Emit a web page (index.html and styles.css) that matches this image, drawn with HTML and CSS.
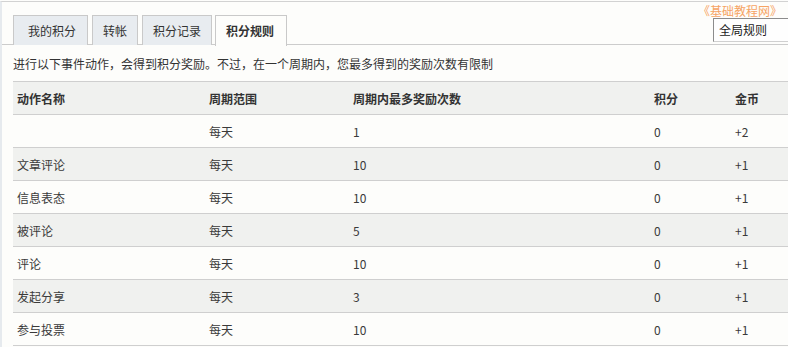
FILE: index.html
```html
<!DOCTYPE html>
<html lang="zh-CN">
<head>
<meta charset="utf-8">
<title>积分规则</title>
<link rel="stylesheet" href="styles.css">
</head>
<body>
<div class="page">
  <a class="brand">《基础教程网》</a>
  <div class="tabbar">
    <ul class="tabs">
      <li class="tab first">我的积分</li>
      <li class="tab">转帐</li>
      <li class="tab">积分记录</li>
      <li class="tab active">积分规则</li>
    </ul>
    <div class="select">全局规则</div>
  </div>
  <p class="intro">进行以下事件动作，会得到积分奖励。不过，在一个周期内，您最多得到的奖励次数有限制</p>
  <table class="rules">
    <colgroup>
      <col class="c1"><col class="c2"><col class="c3"><col class="c4"><col class="c5">
    </colgroup>
    <thead>
      <tr><th>动作名称</th><th>周期范围</th><th>周期内最多奖励次数</th><th>积分</th><th>金币</th></tr>
    </thead>
    <tbody>
      <tr><td></td><td>每天</td><td>1</td><td>0</td><td>+2</td></tr>
      <tr><td>文章评论</td><td>每天</td><td>10</td><td>0</td><td>+1</td></tr>
      <tr><td>信息表态</td><td>每天</td><td>10</td><td>0</td><td>+1</td></tr>
      <tr><td>被评论</td><td>每天</td><td>5</td><td>0</td><td>+1</td></tr>
      <tr><td>评论</td><td>每天</td><td>10</td><td>0</td><td>+1</td></tr>
      <tr><td>发起分享</td><td>每天</td><td>3</td><td>0</td><td>+1</td></tr>
      <tr><td>参与投票</td><td>每天</td><td>10</td><td>0</td><td>+1</td></tr>
    </tbody>
  </table>
</div>
</body>
</html>
```

FILE: styles.css
```css
html, body {
  margin: 0;
  padding: 0;
  background: #fdfdfb;
  overflow: hidden;
}
body {
  font-family: "Noto Sans CJK SC", "Noto Sans", sans-serif;
  font-size: 12px;
  color: #333;
}
.page {
  position: relative;
  margin-top: 1px;
  border-top: 1px solid #d2d2d2;
  border-left: 2px solid #e6eaee;
  height: 345px;
  overflow: hidden;
}
.brand {
  position: absolute;
  top: 1px;
  right: 6px;
  font-size: 12px;
  line-height: 16px;
  color: #f6a464;
  text-decoration: none;
}
.tabbar {
  display: flex;
  justify-content: space-between;
  align-items: flex-start;
  padding: 13px 0 0 11px;
  border-bottom: 1px solid #cccccc;
  height: 29px;
}
.tabs {
  display: flex;
  gap: 4px;
  margin: 0;
  padding: 0;
  list-style: none;
}
.tab {
  height: 29px;
  line-height: 29px;
  padding: 0 10px;
  background: #e8ecf0;
  border: 1px solid #c9c9c9;
  border-bottom: none;
  color: #333;
}
.tab.first {
  padding: 0 11px 0 14px;
}
.tab.active {
  height: 30px;
  margin-left: -1px;
  padding: 0 12px 0 10px;
  background: #fdfdfb;
  font-weight: bold;
  position: relative;
  z-index: 1;
}
.select {
  margin-top: 3px;
  margin-right: -10px;
  width: 78px;
  height: 22px;
  line-height: 22px;
  padding-left: 5px;
  border: 1px solid #d0d0d0;
  border-top-color: #8c8c8c;
  border-left-color: #8c8c8c;
  background: #fefefe;
  color: #222;
}
.intro {
  margin: 0 0 7px;
  padding: 9px 0 0 11px;
  line-height: 20px;
}
.rules {
  margin-left: 11px;
  width: 775px;
  border-collapse: collapse;
  table-layout: fixed;
}
.c1 { width: 192px; }
.c2 { width: 144px; }
.c3 { width: 301px; }
.c4 { width: 81px; }
.c5 { width: 57px; }
.rules th, .rules td {
  height: 31px;
  padding: 1px 4px 0;
  text-align: left;
  vertical-align: middle;
  border-bottom: 1px solid #cfcfcf;
  box-sizing: content-box;
  white-space: nowrap;
}
.rules th {
  font-weight: bold;
  background: #f0f1ef;
  border-top: 1px solid #cfcfcf;
  color: #333;
}
.rules tbody tr:nth-child(even) td {
  background: #f0f1ef;
}
.rules td {
  color: #3a3a3a;
}
```
